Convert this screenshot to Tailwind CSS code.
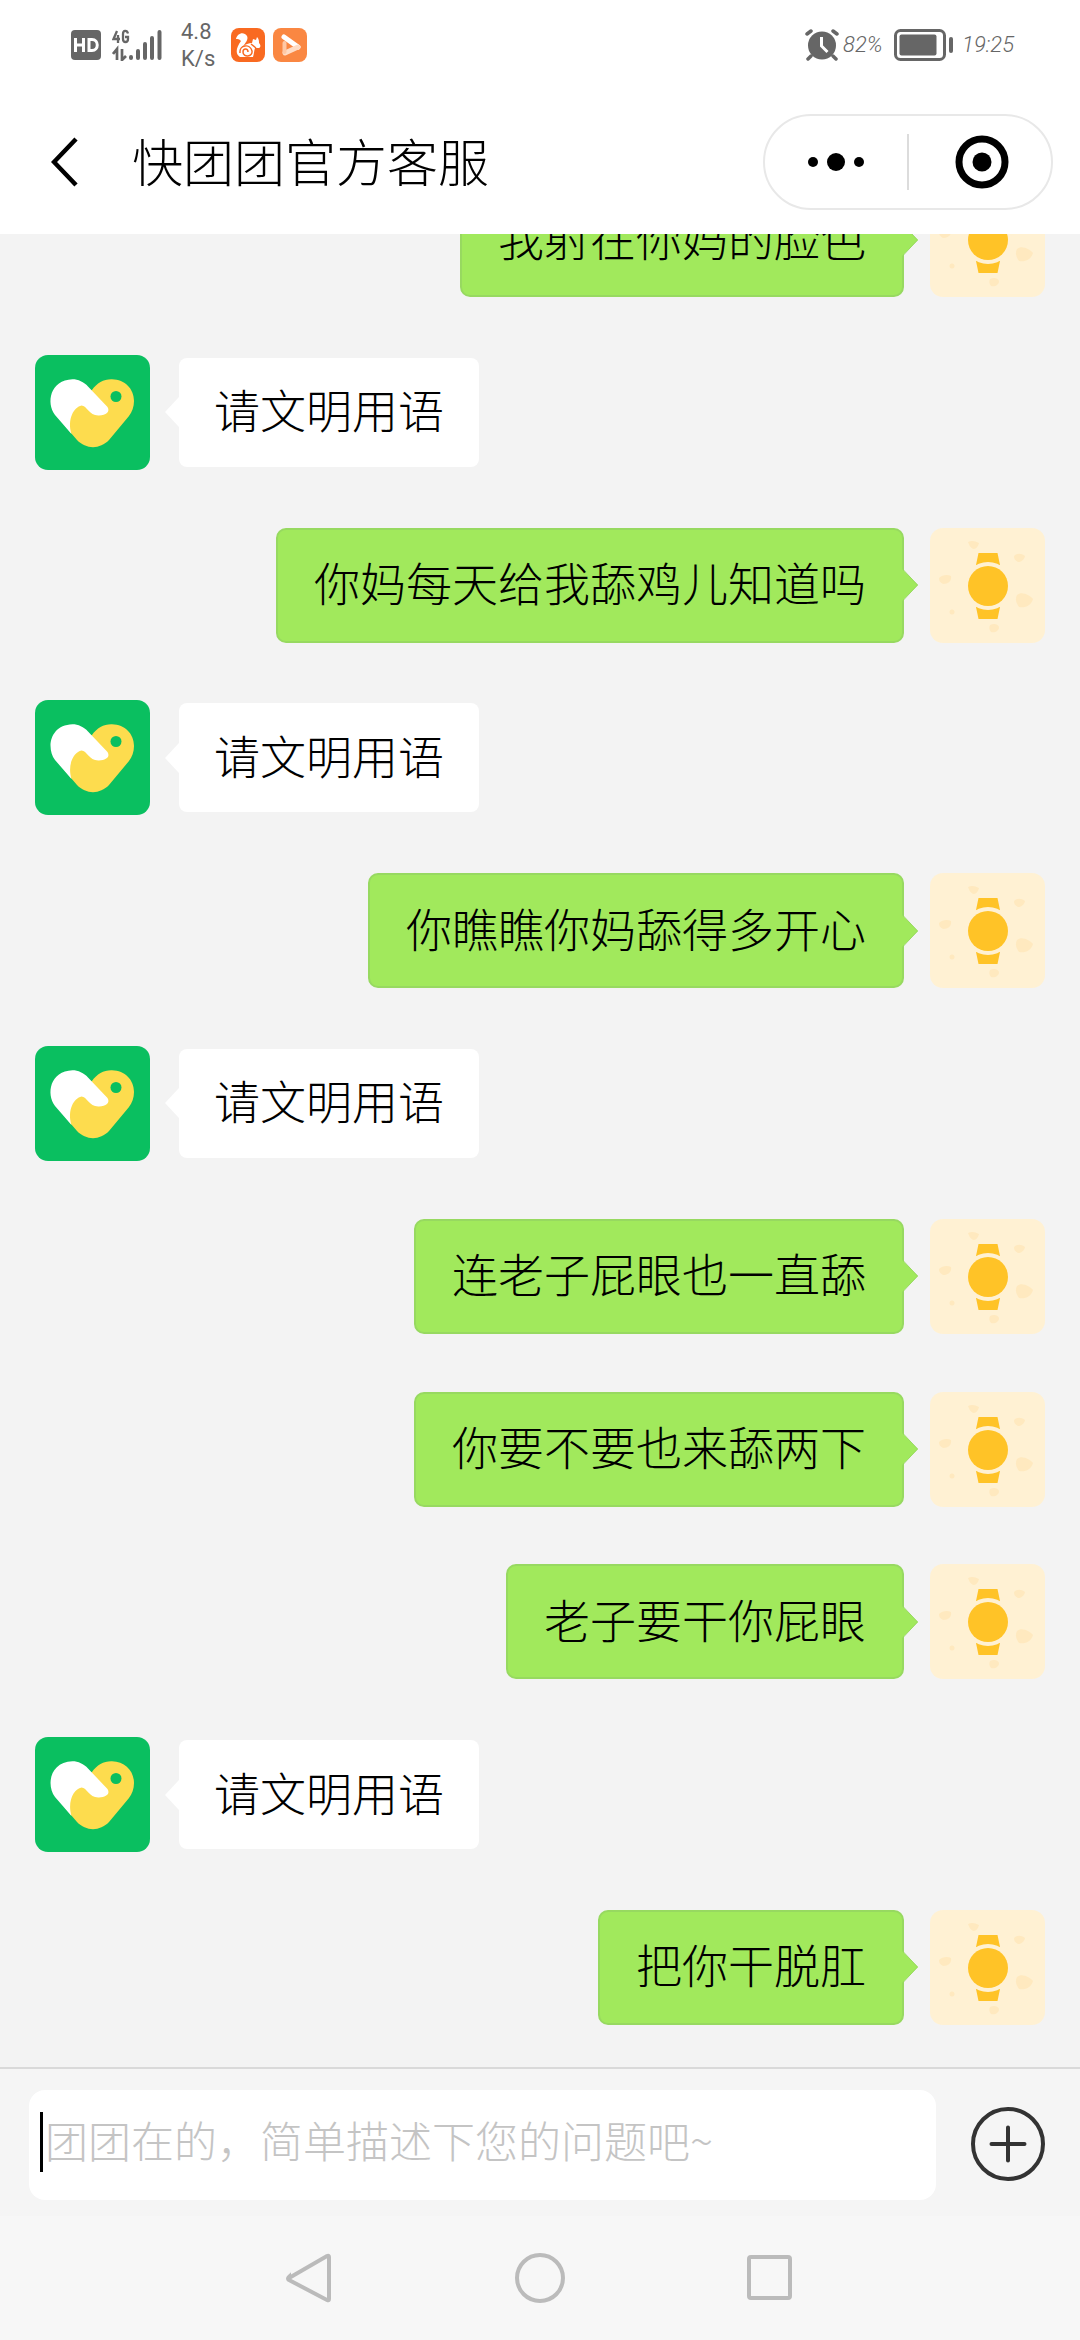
<!DOCTYPE html>
<html lang="zh-CN">
<head>
<meta charset="utf-8">
<meta name="viewport" content="width=device-width, initial-scale=1">
<title>快团团官方客服</title>
<script src="https://cdn.jsdelivr.net/npm/@tailwindcss/browser@4"></script>
</head>
<body class="bg-[#f3f3f3] font-['Noto_Sans_CJK_SC',sans-serif] font-light text-black">

<svg class="hidden" aria-hidden="true">
  <symbol id="service" viewBox="0 0 115 115">
    <rect width="115" height="115" rx="13" fill="#0abf60"/>
    <path d="M57 35C62 28 69 24 77 24.300C90 24.500 99 34 99 46C99 52 97 57 94 61L74 85C65 94.500 51 94.500 42 85L30 71L40 46Z" fill="#fddc4e"/>
    <path d="M37.500 24.300C43 24.300 49 27 53 31.500L72.500 52C75.500 57 71 60 64 60.500C54 61 52 50.500 46.500 50.500C39 52 32 64 36.500 79L20 60C11 48 15 25 37.500 24.300Z" fill="#fff"/>
    <circle cx="81" cy="41.500" r="5.500" fill="#0abf60"/>
  </symbol>
  <symbol id="watch" viewBox="0 0 115 115">
    <rect width="115" height="115" rx="13" fill="#fff1d3"/>
    <g fill="#ffe9bf">
      <path d="M38 14c4-2 7-1 11 1-1 4-3 6-6 6-3-2-4-4-5-7z"/>
      <path d="M84 28c3-3 7-3 11 0-1 4-4 6-7 6-3-2-4-3-4-6z"/>
      <path d="M9 50c3-3 8-4 12-2 1 5-3 8-8 8-3-2-4-3-4-6z"/>
      <path d="M87 67c5-4 12 0 16 4-2 7-8 9-14 8-3-4-4-8-2-12z"/>
      <path d="M60 97c4-2 8-1 9 2 0 4-4 6-8 5-2-2-2-5-1-7z"/>
      <circle cx="22" cy="84" r="2.500"/>
    </g>
    <path d="M48.500 25h19l2.500 12-4 3H50l-4-3zM46 79h24l-2.500 12h-19z" fill="#ffc327"/>
    <circle cx="58" cy="58" r="24" fill="#fff1d3"/>
    <circle cx="58" cy="58" r="20" fill="#ffc327"/>
  </symbol>
  <symbol id="tail" viewBox="0 0 16 32">
    <path d="M0 0L16 16L0 32Z" fill="#a1e95c"/>
    <path d="M1 .500L15.500 16L1 31.500" fill="none" stroke="#97d960"/>
  </symbol>
</svg>

<div class="flex min-h-screen flex-col">

  <div class="flex h-[90px] items-center justify-between bg-white pr-[66px] pl-[71px] font-[Roboto,sans-serif] text-[#666]">
    <div class="flex items-center">
      <svg class="h-[30px] w-[30px]" viewBox="0 0 30 30"><rect width="30" height="30" rx="4" fill="#666"/><path d="M4.500 8v14M12.500 8v14M4.500 15h8M18 9.500v11h3c7 0 7-11 0-11z" fill="none" stroke="#fff" stroke-width="3"/></svg>
      <svg class="ml-[11px] h-8 w-[50px]" viewBox="0 0 50 32" fill="none" stroke="#666">
        <path d="M5 2L1.500 10H8M6 6v8M16 4.500C15 1 11 1 11 5v5c0 4 5 4 5 0V8h-3" stroke-width="2.300"/>
        <path d="M5 31V20L1 25M10 20v11l4-4" stroke-width="2.700"/>
        <path d="M19 28v1M26 22v7M33 15v14M40 9v20M47.500 3v26" stroke-width="4" stroke-linecap="round"/>
      </svg>
      <p class="ml-[19px] w-[50px] text-[22px] leading-[27px] font-normal">4.8<br>K/s</p>
      <svg class="h-[34px] w-[34px]" viewBox="0 0 34 34">
        <rect width="34" height="34" rx="8" fill="#f96a21"/>
        <path d="M5 11C6 5 13 3 16 8C18 12 13 16 12 19C14 16 18 15 21 15L22 11L25 12L26 9C28 11 28 13 28 15C30 17 30 20 27 20L24 20C23 23 23 26 22 29H9C4 26 5 20 10 13C8 11 7 11 5 11Z" fill="#fff"/>
        <path d="M9 25C8 17 19 15 21 23C22 29 12 30 12 24C12 20 17 20 17 24M20 16L25 20" fill="none" stroke="#f96a21" stroke-width="1.500"/>
      </svg>
      <svg class="ml-2 h-[34px] w-[34px]" viewBox="0 0 34 34">
        <rect width="34" height="34" rx="8" fill="#fa8742"/>
        <path d="M11 9L25 19" stroke="#fff" stroke-width="5" stroke-linecap="round"/>
        <path d="M25 19L12 25" stroke="#ffdcc5" stroke-width="5" stroke-linecap="round"/>
        <path d="M11.500 15v9" stroke="#ffc8a5" stroke-width="4" stroke-linecap="round"/>
      </svg>
    </div>
    <div class="flex items-center">
      <svg class="h-8 w-[34px]" viewBox="0 0 34 32">
        <circle cx="17" cy="16.500" r="14" fill="#666"/>
        <path d="M2 5L6 2M28 2l4 3M6 27l-3 3M28 27l3 3" stroke="#666" stroke-width="3.500" stroke-linecap="round"/>
        <path d="M16.500 8v9l6 6" fill="none" stroke="#fff" stroke-width="3"/>
      </svg>
      <p class="ml-1 w-[51px] text-[22px] leading-8 italic">82%</p>
      <svg class="h-8 w-[60px]" viewBox="0 0 60 32">
        <rect x="1.500" y="1.500" width="49" height="29" rx="5" fill="none" stroke="#666" stroke-width="3"/>
        <rect x="5.500" y="5.500" width="37" height="21" rx="2" fill="#666"/>
        <path d="M57 10v12" stroke="#666" stroke-width="4" stroke-linecap="round"/>
      </svg>
      <time class="ml-2 text-[22px] leading-8 italic">19:25</time>
    </div>
  </div>

  <header class="flex h-36 items-center bg-white pr-[27px] pl-[51px]">
    <button type="button" aria-label="返回" class="h-[52px] w-7">
      <svg class="h-[52px] w-7" viewBox="0 0 28 52"><path d="M25 3L3 26L25 49" fill="none" stroke="#000" stroke-width="4.500"/></svg>
    </button>
    <h1 class="ml-[53px] flex-1 pb-1 text-[51px] leading-[60px] font-light">快团团官方客服</h1>
    <div class="flex h-24 w-[290px] items-center rounded-full border-2 border-[#e8e8e8]">
      <button type="button" aria-label="更多" class="flex flex-1 justify-center">
        <svg class="h-5 w-14" viewBox="0 0 56 20"><circle cx="5" cy="10" r="5"/><circle cx="28" cy="10" r="9"/><circle cx="51" cy="10" r="5"/></svg>
      </button>
      <div class="h-14 w-[2px] bg-[#dcdcdc]"></div>
      <button type="button" aria-label="关闭" class="flex flex-1 justify-center">
        <svg class="mr-1 ml-2 h-[54px] w-[54px]" viewBox="0 0 54 54"><circle cx="27" cy="27" r="23" fill="none" stroke="#000" stroke-width="7"/><circle cx="27" cy="27" r="9.500"/></svg>
      </button>
    </div>
  </header>

  <main class="flex flex-1 flex-col overflow-hidden">
    <ul class="-mt-[52px] flex flex-1 flex-col justify-between gap-[57px] px-[35px] pb-[42px] text-[46px] leading-[60px] whitespace-nowrap">
      <li class="flex h-[115px] items-center justify-end">
        <p class="flex h-full items-center rounded-[10px] border-2 border-[#97d960] bg-[#a1e95c] px-9 pb-2">我射在你妈的脸色</p>
        <svg class="z-10 -ml-[2px] h-8 w-4"><use href="#tail"/></svg>
        <svg class="ml-3 h-[115px] w-[115px]"><use href="#watch"/></svg>
      </li>
      <li class="flex h-[115px] items-center">
        <svg class="h-[115px] w-[115px]"><use href="#service"/></svg>
        <svg class="ml-[15px] h-[30px] w-[14px]" viewBox="0 0 14 30"><path d="M14 0L0 15L14 30Z" fill="#fff"/></svg>
        <p class="flex h-[109px] items-center rounded-[8px] bg-white px-[35px] pb-2">请文明用语</p>
      </li>
      <li class="flex h-[115px] items-center justify-end">
        <p class="flex h-full items-center rounded-[10px] border-2 border-[#97d960] bg-[#a1e95c] px-9 pb-2">你妈每天给我舔鸡儿知道吗</p>
        <svg class="z-10 -ml-[2px] h-8 w-4"><use href="#tail"/></svg>
        <svg class="ml-3 h-[115px] w-[115px]"><use href="#watch"/></svg>
      </li>
      <li class="flex h-[115px] items-center">
        <svg class="h-[115px] w-[115px]"><use href="#service"/></svg>
        <svg class="ml-[15px] h-[30px] w-[14px]" viewBox="0 0 14 30"><path d="M14 0L0 15L14 30Z" fill="#fff"/></svg>
        <p class="flex h-[109px] items-center rounded-[8px] bg-white px-[35px] pb-2">请文明用语</p>
      </li>
      <li class="flex h-[115px] items-center justify-end">
        <p class="flex h-full items-center rounded-[10px] border-2 border-[#97d960] bg-[#a1e95c] px-9 pb-2">你瞧瞧你妈舔得多开心</p>
        <svg class="z-10 -ml-[2px] h-8 w-4"><use href="#tail"/></svg>
        <svg class="ml-3 h-[115px] w-[115px]"><use href="#watch"/></svg>
      </li>
      <li class="flex h-[115px] items-center">
        <svg class="h-[115px] w-[115px]"><use href="#service"/></svg>
        <svg class="ml-[15px] h-[30px] w-[14px]" viewBox="0 0 14 30"><path d="M14 0L0 15L14 30Z" fill="#fff"/></svg>
        <p class="flex h-[109px] items-center rounded-[8px] bg-white px-[35px] pb-2">请文明用语</p>
      </li>
      <li class="flex h-[115px] items-center justify-end">
        <p class="flex h-full items-center rounded-[10px] border-2 border-[#97d960] bg-[#a1e95c] px-9 pb-2">连老子屁眼也一直舔</p>
        <svg class="z-10 -ml-[2px] h-8 w-4"><use href="#tail"/></svg>
        <svg class="ml-3 h-[115px] w-[115px]"><use href="#watch"/></svg>
      </li>
      <li class="flex h-[115px] items-center justify-end">
        <p class="flex h-full items-center rounded-[10px] border-2 border-[#97d960] bg-[#a1e95c] px-9 pb-2">你要不要也来舔两下</p>
        <svg class="z-10 -ml-[2px] h-8 w-4"><use href="#tail"/></svg>
        <svg class="ml-3 h-[115px] w-[115px]"><use href="#watch"/></svg>
      </li>
      <li class="flex h-[115px] items-center justify-end">
        <p class="flex h-full items-center rounded-[10px] border-2 border-[#97d960] bg-[#a1e95c] px-9 pb-2">老子要干你屁眼</p>
        <svg class="z-10 -ml-[2px] h-8 w-4"><use href="#tail"/></svg>
        <svg class="ml-3 h-[115px] w-[115px]"><use href="#watch"/></svg>
      </li>
      <li class="flex h-[115px] items-center">
        <svg class="h-[115px] w-[115px]"><use href="#service"/></svg>
        <svg class="ml-[15px] h-[30px] w-[14px]" viewBox="0 0 14 30"><path d="M14 0L0 15L14 30Z" fill="#fff"/></svg>
        <p class="flex h-[109px] items-center rounded-[8px] bg-white px-[35px] pb-2">请文明用语</p>
      </li>
      <li class="flex h-[115px] items-center justify-end">
        <p class="flex h-full items-center rounded-[10px] border-2 border-[#97d960] bg-[#a1e95c] px-9 pb-2">把你干脱肛</p>
        <svg class="z-10 -ml-[2px] h-8 w-4"><use href="#tail"/></svg>
        <svg class="ml-3 h-[115px] w-[115px]"><use href="#watch"/></svg>
      </li>
    </ul>
  </main>

  <form class="flex items-center border-t-2 border-[#d9d9d9] bg-[#f5f5f5] pt-[21px] pr-[34px] pb-4 pl-[29px]">
    <div class="relative flex-1">
      <input type="text" aria-label="问题描述" placeholder="团团在的，简单描述下您的问题吧~" class="block h-[110px] w-full rounded-[16px] bg-white pr-3 pb-3 pl-4 text-[43px] font-light outline-none placeholder:text-[#c4c4c4]">
      <span class="absolute top-[22px] left-[11px] h-[60px] w-[3px] bg-black"></span>
    </div>
    <button type="button" aria-label="添加" class="ml-[34px]">
      <svg class="h-[76px] w-[76px]" viewBox="0 0 76 76" fill="none" stroke="#333" stroke-width="4"><circle cx="38" cy="37" r="35"/><path d="M21.500 37h33M38 20.500v33" stroke-linecap="round"/></svg>
    </button>
  </form>

  <nav class="flex h-[124px] items-center justify-center gap-[178px] bg-[#f7f7f7]">
    <button type="button" aria-label="后退"><svg class="h-[52px] w-[52px]" viewBox="0 0 52 52"><path d="M5 26L43 4Q45 3 45 5V47Q45 49 43 48L5 28Q3 27 5 25Z" fill="none" stroke="#bbb" stroke-width="4"/></svg></button>
    <button type="button" aria-label="主屏幕"><svg class="h-[52px] w-[52px]" viewBox="0 0 52 52"><circle cx="26" cy="26" r="23" fill="none" stroke="#bbb" stroke-width="4"/></svg></button>
    <button type="button" aria-label="最近任务"><svg class="h-[52px] w-[52px]" viewBox="0 0 52 52"><rect x="5" y="5" width="41" height="41" rx="2" fill="none" stroke="#bbb" stroke-width="4"/></svg></button>
  </nav>
</div>
</body>
</html>
